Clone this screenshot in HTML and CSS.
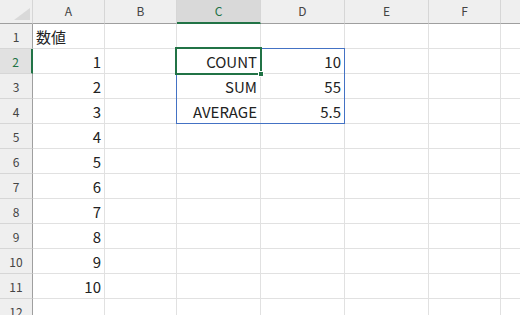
FILE: index.html
```html
<!DOCTYPE html>
<html lang="ja">
<head>
    <meta charset="UTF-8">
    <title>Sheet1</title>
    <link rel="stylesheet" href="styles.css">
</head>
<body>
    <div class="sheet">
        <div class="grid">
            <div class="corner"><span class="tri"></span></div>
            <div class="col-head">A</div>
            <div class="col-head">B</div>
            <div class="col-head active">C</div>
            <div class="col-head">D</div>
            <div class="col-head">E</div>
            <div class="col-head">F</div>
            <div class="col-head last"></div>

            <div class="row-head">1</div>
            <div class="cell text">数値</div><div class="cell"></div><div class="cell"></div><div class="cell"></div><div class="cell"></div><div class="cell"></div><div class="cell"></div>

            <div class="row-head active">2</div>
            <div class="cell num">1</div><div class="cell"></div><div class="cell num">COUNT</div><div class="cell num">10</div><div class="cell"></div><div class="cell"></div><div class="cell"></div>

            <div class="row-head">3</div>
            <div class="cell num">2</div><div class="cell"></div><div class="cell num">SUM</div><div class="cell num">55</div><div class="cell"></div><div class="cell"></div><div class="cell"></div>

            <div class="row-head">4</div>
            <div class="cell num">3</div><div class="cell"></div><div class="cell num">AVERAGE</div><div class="cell num">5.5</div><div class="cell"></div><div class="cell"></div><div class="cell"></div>

            <div class="row-head">5</div>
            <div class="cell num">4</div><div class="cell"></div><div class="cell"></div><div class="cell"></div><div class="cell"></div><div class="cell"></div><div class="cell"></div>

            <div class="row-head">6</div>
            <div class="cell num">5</div><div class="cell"></div><div class="cell"></div><div class="cell"></div><div class="cell"></div><div class="cell"></div><div class="cell"></div>

            <div class="row-head">7</div>
            <div class="cell num">6</div><div class="cell"></div><div class="cell"></div><div class="cell"></div><div class="cell"></div><div class="cell"></div><div class="cell"></div>

            <div class="row-head">8</div>
            <div class="cell num">7</div><div class="cell"></div><div class="cell"></div><div class="cell"></div><div class="cell"></div><div class="cell"></div><div class="cell"></div>

            <div class="row-head">9</div>
            <div class="cell num">8</div><div class="cell"></div><div class="cell"></div><div class="cell"></div><div class="cell"></div><div class="cell"></div><div class="cell"></div>

            <div class="row-head">10</div>
            <div class="cell num">9</div><div class="cell"></div><div class="cell"></div><div class="cell"></div><div class="cell"></div><div class="cell"></div><div class="cell"></div>

            <div class="row-head">11</div>
            <div class="cell num">10</div><div class="cell"></div><div class="cell"></div><div class="cell"></div><div class="cell"></div><div class="cell"></div><div class="cell"></div>

            <div class="row-head">12</div>
            <div class="cell"></div><div class="cell"></div><div class="cell"></div><div class="cell"></div><div class="cell"></div><div class="cell"></div><div class="cell"></div>
        </div>

        <!-- range C2:D4 and active cell C2 -->
        <div class="range"></div>
        <div class="active-cell"><span class="handle"></span></div>
    </div>
</body>
</html>
```

FILE: styles.css
```css
* {
    margin: 0;
    padding: 0;
    box-sizing: border-box;
}

body {
    font-family: "Noto Sans CJK JP", "Noto Sans", sans-serif;
    background: #ffffff;
    width: 520px;
    height: 315px;
    overflow: hidden;
}

.sheet {
    position: relative;
}

.grid {
    display: grid;
    grid-template-columns: 33px 72px 72px 84px 84px 84px 72px 40px;
    grid-template-rows: 24px;
    grid-auto-rows: 25px;
}

.corner,
.col-head,
.row-head {
    background: #efefef;
    color: #444444;
    font-size: 12px;
    border-right: 1px solid #d6d6d6;
    border-bottom: 1px solid #d6d6d6;
}

.corner {
    position: relative;
    border-bottom-color: #9f9f9f;
}

.tri {
    position: absolute;
    right: 2px;
    bottom: 3px;
    width: 16px;
    height: 12px;
    background: #d9d9d9;
    clip-path: polygon(100% 0, 100% 100%, 0 100%);
}

.col-head {
    display: flex;
    justify-content: center;
    align-items: flex-start;
    padding-top: 2px;
    border-bottom-color: #9f9f9f;
}

.col-head.active {
    background: #d9d9d9;
    color: #217346;
    border-bottom: 2px solid #217346;
}

.row-head {
    display: flex;
    justify-content: center;
    align-items: center;
    border-right-color: #9f9f9f;
}

.row-head.active {
    background: #e1e1e1;
    color: #217346;
    border-right: 2px solid #217346;
}

.cell {
    display: flex;
    align-items: center;
    font-size: 15px;
    color: #222222;
    border-right: 1px solid #e1e1e1;
    border-bottom: 1px solid #e1e1e1;
    white-space: nowrap;
}

.cell.num {
    justify-content: flex-end;
    padding-right: 3px;
}

.cell.text {
    padding-left: 3px;
}

.range {
    position: absolute;
    left: 176px;
    top: 48px;
    width: 169px;
    height: 76px;
    border: 1px solid #4472c4;
    pointer-events: none;
}

.active-cell {
    position: absolute;
    left: 175px;
    top: 47px;
    width: 87px;
    height: 28px;
    border: 2px solid #217346;
    pointer-events: none;
}

.handle {
    position: absolute;
    right: -4px;
    bottom: -4px;
    width: 6px;
    height: 6px;
    background: #217346;
    border: 1px solid #ffffff;
}
```
